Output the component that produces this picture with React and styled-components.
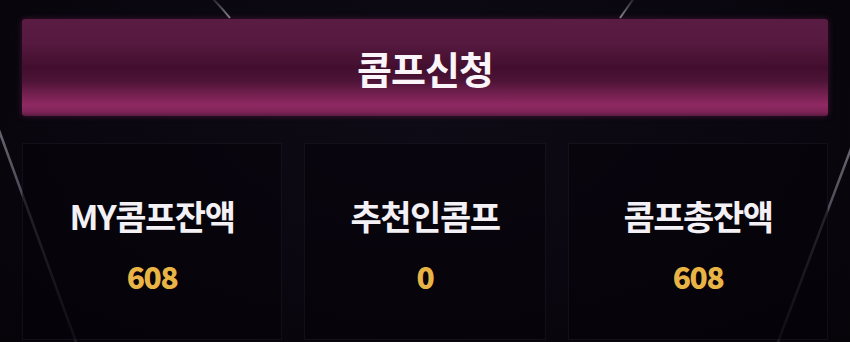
import React from 'react';
import styled, { createGlobalStyle } from 'styled-components';

const GlobalStyle = createGlobalStyle`
  html, body {
    margin: 0;
    padding: 0;
    background: #0a0710;
  }
  body {
    font-family: "Noto Sans CJK KR", "Noto Sans", sans-serif;
  }
`;

const Page = styled.div`
  position: relative;
  height: 342px;
  overflow: hidden;
  box-sizing: border-box;
  padding: 19px 22px 0;
  display: flex;
  flex-direction: column;
  gap: 27px;
  background:
    radial-gradient(ellipse at 50% 35%, #0e0b16 0%, #0a0710 55%, #060309 100%);
`;

const Streaks = styled.svg`
  position: absolute;
  inset: 0;
  width: 100%;
  height: 100%;
  pointer-events: none;
`;

const ApplyButton = styled.button`
  position: relative;
  z-index: 1;
  height: 97px;
  border: none;
  border-radius: 3px;
  color: #fbf4f8;
  font-family: inherit;
  font-size: 38px;
  font-weight: 700;
  letter-spacing: -1px;
  cursor: pointer;
  background: linear-gradient(
    to bottom,
    #5a1c43 0%,
    #56193f 25%,
    #420e2e 50%,
    #4d1437 64%,
    #7a2254 80%,
    #8f2963 89%,
    #7c2356 96%,
    #5a1a41 100%
  );
  box-shadow: 0 0 6px rgba(140, 40, 100, 0.4);
`;

const CardRow = styled.div`
  position: relative;
  z-index: 1;
  flex: 1;
  display: grid;
  grid-template-columns: 260px 1fr 260px;
  gap: 22px;
  padding-bottom: 2px;
`;

const Card = styled.div`
  display: flex;
  flex-direction: column;
  align-items: center;
  justify-content: center;
  gap: 24px;
  padding-top: 6px;
  border: 1px solid rgba(120, 100, 140, 0.12);
  background: rgba(6, 2, 9, 0.55);
`;

const Label = styled.div`
  color: #f4f1f6;
  font-size: 34px;
  font-weight: 700;
  letter-spacing: -1.5px;
  line-height: 38px;
`;

const Value = styled.div`
  color: #e8b446;
  font-size: 30px;
  font-weight: 900;
  letter-spacing: -1.5px;
  line-height: 34px;
`;

const stats = [
  { label: 'MY콤프잔액', value: '608' },
  { label: '추천인콤프', value: '0' },
  { label: '콤프총잔액', value: '608' },
];

const App = () => {
  return (
    <Page>
      <GlobalStyle />
      <Streaks viewBox="0 0 850 342" preserveAspectRatio="none">
        <defs>
          <linearGradient id="fadeA" x1="0" y1="0" x2="0" y2="1">
            <stop offset="0" stopColor="#8a8594" stopOpacity="0.2" />
            <stop offset="1" stopColor="#b9b4c2" stopOpacity="0.75" />
          </linearGradient>
          <linearGradient id="fadeB" x1="0" y1="0" x2="0" y2="1">
            <stop offset="0" stopColor="#9e99a8" stopOpacity="0.65" />
            <stop offset="1" stopColor="#6c6878" stopOpacity="0.25" />
          </linearGradient>
        </defs>
        <path d="M212 -2 Q222 8 230 18" stroke="url(#fadeA)" strokeWidth="2" fill="none" />
        <path d="M634 -2 L620 18" stroke="url(#fadeA)" strokeWidth="2" fill="none" />
        <path d="M-4 122 L76 342" stroke="url(#fadeB)" strokeWidth="2.5" fill="none" />
        <path d="M852 146 L778 342" stroke="url(#fadeB)" strokeWidth="2.5" fill="none" />
      </Streaks>
      <ApplyButton>콤프신청</ApplyButton>
      <CardRow>
        {stats.map(item => (
          <Card key={item.label}>
            <Label>{item.label}</Label>
            <Value>{item.value}</Value>
          </Card>
        ))}
      </CardRow>
    </Page>
  );
};

export default App;
